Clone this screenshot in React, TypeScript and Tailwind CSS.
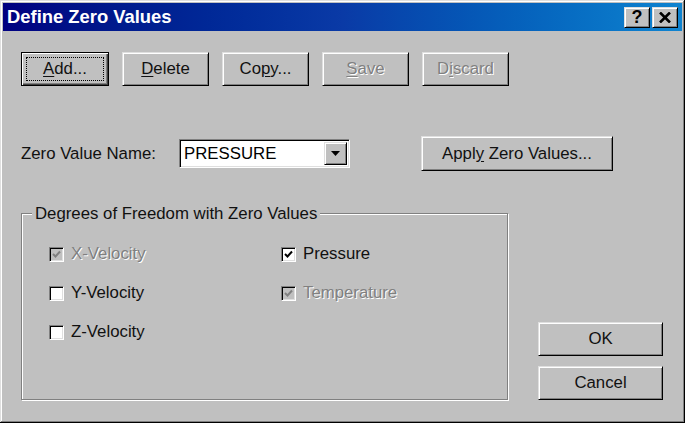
const font = "font-['Liberation_Sans',Arial,sans-serif]"

const raised =
  "border border-t-[#dfdfdf] border-l-[#dfdfdf] border-r-black border-b-black shadow-[inset_1px_1px_#fff,inset_-1px_-1px_#808080]"

const disabledText = "text-[#808080] [text-shadow:1px_1px_0_#fff]"

function Mn({ children }: { children: string }) {
  return <span className="underline underline-offset-[2px]">{children}</span>
}

function Btn({
  children,
  width = "w-[87px]",
  height = "h-[34px]",
  disabled = false,
}: {
  children: React.ReactNode
  width?: string
  height?: string
  disabled?: boolean
}) {
  return (
    <button
      className={`${raised} ${width} ${height} bg-[#c0c0c0] flex items-center justify-center text-[16.8px] ${
        disabled ? disabledText : "text-[#111]"
      }`}
    >
      {children}
    </button>
  )
}

function DefaultBtn({ children }: { children: React.ReactNode }) {
  return (
    <button className="w-[88px] h-[34px] bg-[#c0c0c0] border border-black shadow-[inset_1px_1px_#fff,inset_-1px_-1px_#404040,inset_-2px_-2px_#808080] flex p-[4px] text-[16.8px] text-[#111]">
      <span className="flex-1 flex items-center justify-center border border-dotted border-black">
        {children}
      </span>
    </button>
  )
}

function Check({
  label,
  checked = false,
  disabled = false,
}: {
  label: string
  checked?: boolean
  disabled?: boolean
}) {
  return (
    <div className="h-[20px] flex items-center gap-[7px]">
      <span
        className={`w-[15px] h-[15px] flex items-center justify-center border border-t-[#808080] border-l-[#808080] border-r-white border-b-white shadow-[inset_1px_1px_#000,inset_-1px_-1px_#dfdfdf] ${
          disabled ? "bg-[#c0c0c0]" : "bg-white"
        }`}
      >
        {checked && (
          <svg width="9" height="9" viewBox="0 0 9 9">
            <path
              d="M1 4 L3.5 6.5 L8 1.5"
              fill="none"
              stroke={disabled ? "#808080" : "#000"}
              strokeWidth="2"
            />
          </svg>
        )}
      </span>
      <span className={`text-[16.8px] ${disabled ? disabledText : "text-[#111]"}`}>{label}</span>
    </div>
  )
}

export default function App() {
  return (
    <div
      className={`${font} w-[685px] h-[423px] bg-[#c0c0c0] p-[3px] flex flex-col shadow-[inset_-1px_-1px_#000,inset_1px_1px_#dfdfdf,inset_-2px_-2px_#808080,inset_2px_2px_#fff]`}
    >
      {/* title bar */}
      <div className="h-[28px] flex items-center pl-[4px] pr-[4px] bg-gradient-to-r from-[#000080] via-[#0a3aa6] to-[#1084d0]">
        <span className="flex-1 text-white font-bold text-[18.4px]">Define Zero Values</span>
        <div className="flex gap-[2px]">
          <span className={`${raised} w-[26px] h-[21px] bg-[#c0c0c0] flex items-center justify-center font-bold text-[18px] text-black`}>
            ?
          </span>
          <span className={`${raised} w-[26px] h-[21px] bg-[#c0c0c0] flex items-center justify-center`}>
            <svg width="12" height="11" viewBox="0 0 12 11">
              <path d="M1 0.5 L11 10.5 M11 0.5 L1 10.5" stroke="#000" strokeWidth="2.6" />
            </svg>
          </span>
        </div>
      </div>

      <div className="flex-1 flex flex-col pl-[18px] pt-[21px]">
        {/* top buttons */}
        <div className="flex gap-[13px]">
          <DefaultBtn>
            <Mn>A</Mn>dd...
          </DefaultBtn>
          <Btn>
            <Mn>D</Mn>elete
          </Btn>
          <Btn>
            Co<Mn>p</Mn>y...
          </Btn>
          <Btn disabled>
            <Mn>S</Mn>ave
          </Btn>
          <Btn disabled>
            D<Mn>i</Mn>scard
          </Btn>
        </div>

        {/* name row */}
        <div className="mt-[50px] h-[35px] flex items-center">
          <span className="w-[158px] text-[16.8px] text-[#111]">Zero Value Name:</span>
          <div className="w-[171px] h-[29px] bg-white flex items-stretch border border-t-[#808080] border-l-[#808080] border-r-white border-b-white shadow-[inset_1px_1px_#000,inset_-1px_-1px_#dfdfdf] p-[2px]">
            <span className="flex-1 flex items-center pl-[2px] text-[16.8px] text-black">PRESSURE</span>
            <span className={`${raised} w-[23px] bg-[#c0c0c0] flex items-center justify-center`}>
              <svg width="9" height="5" viewBox="0 0 9 5">
                <path d="M0 0 H9 L4.5 5 Z" fill="#000" />
              </svg>
            </span>
          </div>
          <div className="ml-[71px]">
            <Btn width="w-[192px]" height="h-[35px]">
              Appl<Mn>y</Mn>&nbsp;Zero Values...
            </Btn>
          </div>
        </div>

        {/* group + ok/cancel */}
        <div className="mt-[42px] flex items-end">
          <div className="relative w-[487px] h-[187px] border border-[#808080] shadow-[1px_1px_0_#fff,inset_1px_1px_0_#fff] pl-[27px] pt-[30px]">
            <span className="absolute left-[10px] -top-[10px] px-[3px] bg-[#c0c0c0] text-[16.8px] leading-[19px] text-[#111]">
              Degrees of Freedom with Zero Values
            </span>
            <div className="grid grid-cols-[232px_auto] gap-y-[19px]">
              <Check label="X-Velocity" checked disabled />
              <Check label="Pressure" checked />
              <Check label="Y-Velocity" />
              <Check label="Temperature" checked disabled />
              <Check label="Z-Velocity" />
            </div>
          </div>
          <div className="ml-[30px] flex flex-col gap-[10px]">
            <Btn width="w-[125px]">OK</Btn>
            <Btn width="w-[125px]">Cancel</Btn>
          </div>
        </div>
      </div>
    </div>
  )
}
